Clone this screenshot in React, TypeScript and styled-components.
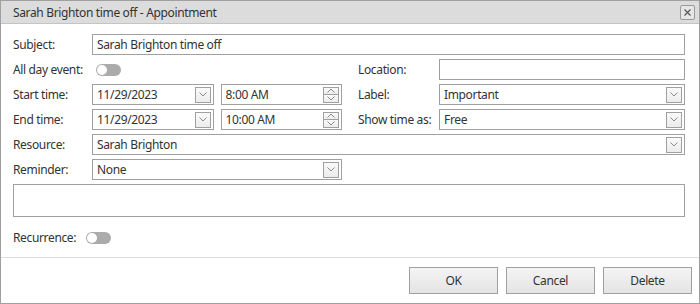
import styled, { createGlobalStyle } from 'styled-components';

const GlobalStyle = createGlobalStyle`
  html, body {
    margin: 0;
    padding: 0;
    background: #fff;
  }
  body {
    font-family: 'Noto Sans', 'Segoe UI', sans-serif;
    font-size: 12px;
    letter-spacing: -0.35px;
    color: #333;
  }
`;

const Dialog = styled.div`
  width: 700px;
  height: 304px;
  box-sizing: border-box;
  border: 1px solid #a0a0a0;
  display: flex;
  flex-direction: column;
  background: #fff;
`;

const Header = styled.div`
  height: 23px;
  box-sizing: border-box;
  flex: none;
  background: #dcdcdc;
  border-bottom: 1px solid #c4c4c4;
  display: flex;
  align-items: center;
  justify-content: space-between;
  padding: 0 4px 0 12px;
`;

const Title = styled.span`
  color: #333;
`;

const CloseButton = styled.button`
  width: 15px;
  height: 15px;
  box-sizing: border-box;
  padding: 0;
  border: 1px solid #9a9a9a;
  border-radius: 2px;
  background: #e6e6e6;
  display: flex;
  align-items: center;
  justify-content: center;
`;

const Body = styled.div`
  flex: 1;
  padding: 10px 14px 0 12px;
`;

const Form = styled.div`
  display: grid;
  grid-template-columns: 79px 250px 16px 81px 246px;
  grid-auto-rows: 21px;
  row-gap: 4px;
  align-items: center;
`;

const Label = styled.span<{ col?: number }>`
  grid-column: ${(p) => p.col ?? 1};
  white-space: nowrap;
`;

const Field = styled.div<{ col?: string }>`
  grid-column: ${(p) => p.col ?? '2'};
  height: 21px;
  box-sizing: border-box;
  border: 1px solid #a0a0a0;
  background: #fff;
  display: flex;
  align-items: center;
  padding: 0 2px 0 4px;
  gap: 4px;
`;

const FieldText = styled.span`
  flex: 1;
  white-space: nowrap;
  overflow: hidden;
`;

const Memo = styled.div`
  height: 33px;
  margin-top: 4px;
  box-sizing: border-box;
  border: 1px solid #a0a0a0;
`;

const Pair = styled.div`
  grid-column: 2;
  display: flex;
  gap: 7px;
`;

const PairField = styled(Field)`
  flex: 1;
  min-width: 0;
`;

const DropButton = styled.span`
  width: 16px;
  height: 16px;
  box-sizing: border-box;
  border: 1px solid #a0a0a0;
  background: linear-gradient(#fafafa, #ececec);
  display: flex;
  align-items: center;
  justify-content: center;
`;

const Spin = styled.span`
  display: flex;
  flex-direction: column;
  width: 16px;
  height: 16px;
  box-sizing: border-box;
  border: 1px solid #a0a0a0;
`;

const SpinHalf = styled.span<{ top?: boolean }>`
  flex: 1;
  display: flex;
  align-items: center;
  justify-content: center;
  background: linear-gradient(#fafafa, #ececec);
  border-top: ${(p) => (p.top ? 'none' : '1px solid #a0a0a0')};
`;

const Toggle = styled.span`
  grid-column: 2;
  width: 25px;
  height: 12px;
  border-radius: 6px;
  background: #ababab;
  position: relative;
  margin-left: 4px;
`;

const Knob = styled.span`
  position: absolute;
  left: 1px;
  top: 1px;
  width: 10px;
  height: 10px;
  border-radius: 50%;
  background: #fff;
`;

const RecurrenceRow = styled.div`
  display: flex;
  align-items: center;
  gap: 10px;
  height: 21px;
  margin-top: 10px;
`;

const RecurrenceToggle = styled(Toggle)`
  margin-left: 0;
`;

const Footer = styled.div`
  height: 46px;
  flex: none;
  box-sizing: border-box;
  border-top: 1px solid #dcdcdc;
  display: flex;
  align-items: center;
  justify-content: flex-end;
  gap: 8px;
  padding: 0 7px 0 0;
`;

const Button = styled.button`
  width: 89px;
  height: 27px;
  box-sizing: border-box;
  border: 1px solid #a0a0a0;
  background: linear-gradient(#f4f4f4, #e4e4e4);
  font-family: 'Noto Sans', 'Segoe UI', sans-serif;
  font-size: 12px;
  letter-spacing: -0.35px;
  color: #333;
  padding: 0;
`;

const Chevron = ({ up }: { up?: boolean }) => (
  <svg width="8" height="5" viewBox="0 0 8 5">
    <path
      d={up ? 'M0.5 4.5 L4 1 L7.5 4.5' : 'M0.5 0.5 L4 4 L7.5 0.5'}
      fill="none"
      stroke="#8a8a8a"
      strokeWidth="1"
    />
  </svg>
);

const Select = ({ value, col }: { value: string; col?: string }) => (
  <Field col={col}>
    <FieldText>{value}</FieldText>
    <DropButton>
      <Chevron />
    </DropButton>
  </Field>
);

const DateEdit = ({ date, time }: { date: string; time: string }) => (
  <Pair>
    <PairField>
      <FieldText>{date}</FieldText>
      <DropButton>
        <Chevron />
      </DropButton>
    </PairField>
    <PairField>
      <FieldText>{time}</FieldText>
      <Spin>
        <SpinHalf top>
          <Chevron up />
        </SpinHalf>
        <SpinHalf>
          <Chevron />
        </SpinHalf>
      </Spin>
    </PairField>
  </Pair>
);

const App = () => (
  <>
    <GlobalStyle />
    <Dialog>
      <Header>
        <Title>Sarah Brighton time off - Appointment</Title>
        <CloseButton>
          <svg width="7" height="7" viewBox="0 0 7 7">
            <path d="M0.5 0.5 L6.5 6.5 M6.5 0.5 L0.5 6.5" stroke="#555" strokeWidth="1.2" />
          </svg>
        </CloseButton>
      </Header>
      <Body>
        <Form>
          <Label>Subject:</Label>
          <Field col="2 / 6">
            <FieldText>Sarah Brighton time off</FieldText>
          </Field>

          <Label>All day event:</Label>
          <Toggle>
            <Knob />
          </Toggle>
          <Label col={4}>Location:</Label>
          <Field col="5" />

          <Label>Start time:</Label>
          <DateEdit date="11/29/2023" time="8:00 AM" />
          <Label col={4}>Label:</Label>
          <Select col="5" value="Important" />

          <Label>End time:</Label>
          <DateEdit date="11/29/2023" time="10:00 AM" />
          <Label col={4}>Show time as:</Label>
          <Select col="5" value="Free" />

          <Label>Resource:</Label>
          <Select col="2 / 6" value="Sarah Brighton" />

          <Label>Reminder:</Label>
          <Select value="None" />
        </Form>
        <Memo />
        <RecurrenceRow>
          <span>Recurrence:</span>
          <RecurrenceToggle>
            <Knob />
          </RecurrenceToggle>
        </RecurrenceRow>
      </Body>
      <Footer>
        <Button>OK</Button>
        <Button>Cancel</Button>
        <Button>Delete</Button>
      </Footer>
    </Dialog>
  </>
);

export default App;
